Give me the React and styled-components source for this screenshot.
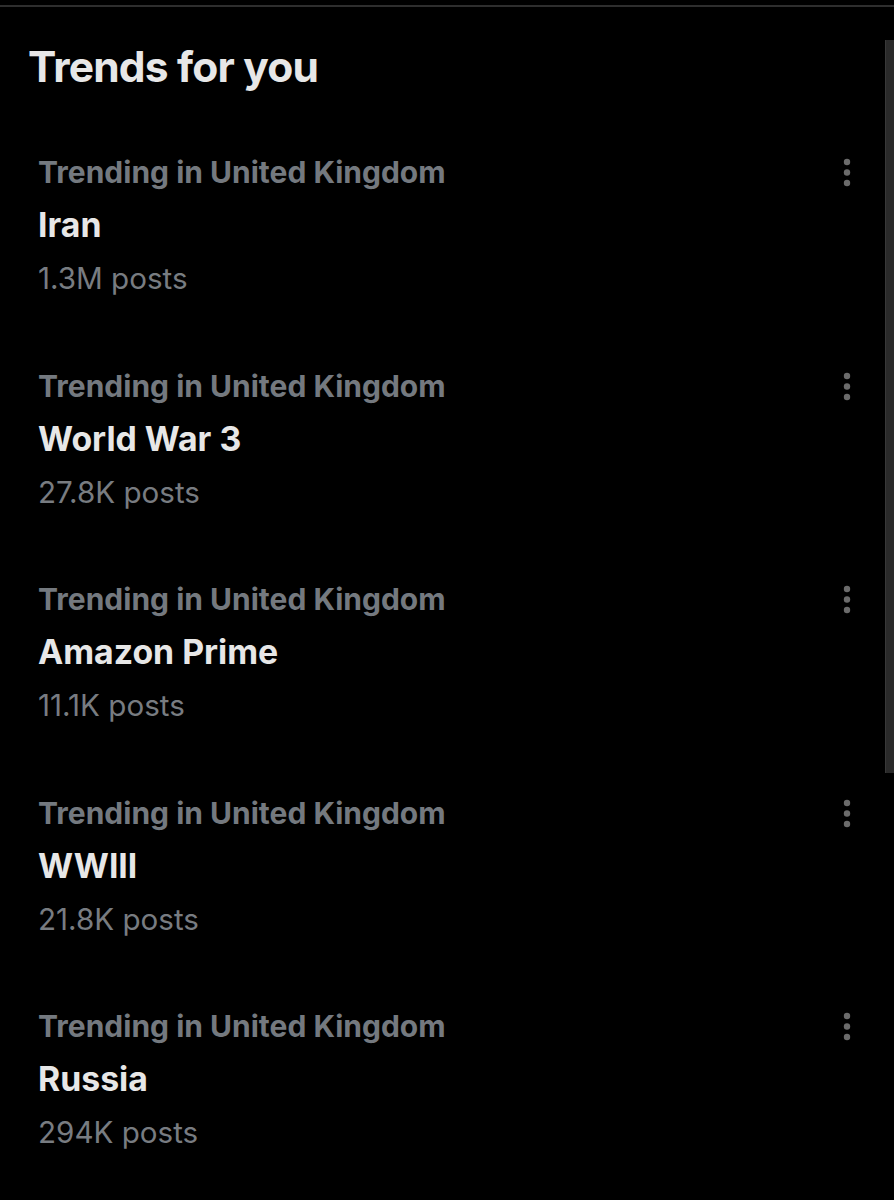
import React from 'react';
import styled, { createGlobalStyle } from 'styled-components';

const GlobalStyle = createGlobalStyle`
  html, body {
    margin: 0;
    padding: 0;
    background: #000;
  }
  body {
    font-family: Inter, "Noto Sans", sans-serif;
    -webkit-font-smoothing: antialiased;
  }
`;

const Page = styled.div`
  position: relative;
  width: 894px;
  min-height: 1200px;
  background: #000;
  padding-top: 5px;
  box-sizing: border-box;
  overflow: hidden;
`;

const TopRule = styled.div`
  height: 2px;
  background: #2e2e2e;
`;

const Header = styled.div`
  padding: 34px 28px 49px;
  h2 {
    margin: 0;
    font-size: 42.5px;
    line-height: 52px;
    font-weight: 700;
    color: #e7e7e7;
    letter-spacing: -0.8px;
  }
`;

const TrendList = styled.div`
  display: flex;
  flex-direction: column;
`;

const TrendRow = styled.div`
  display: flex;
  align-items: flex-start;
  justify-content: space-between;
  padding: 12px 37px 55.5px 38px;
`;

const TrendText = styled.div`
  display: flex;
  flex-direction: column;
`;

const Context = styled.span`
  font-size: 30px;
  line-height: 36px;
  font-weight: 700;
  color: #74797f;
`;

const Name = styled.span`
  margin-top: 10px;
  font-size: 33.8px;
  line-height: 50px;
  font-weight: 700;
  color: #e7e7e7;
`;

const Count = styled.span`
  margin-top: 6px;
  font-size: 29.6px;
  line-height: 44px;
  font-weight: 400;
  color: #787c81;
`;

const MoreButton = styled.div`
  width: 20px;
  height: 36px;
  margin-top: 1px;
  display: flex;
  align-items: center;
  justify-content: center;
  svg {
    display: block;
  }
`;

const ScrollThumb = styled.div`
  position: absolute;
  top: 40px;
  right: 0;
  width: 8px;
  height: 733px;
  background: #2a2a2a;
  border-left: 1px solid #383838;
`;

const trends = [
  { name: 'Iran', posts: '1.3M posts' },
  { name: 'World War 3', posts: '27.8K posts' },
  { name: 'Amazon Prime', posts: '11.1K posts' },
  { name: 'WWIII', posts: '21.8K posts' },
  { name: 'Russia', posts: '294K posts' },
];

function Dots() {
  return (
    <svg width="8" height="30" viewBox="0 0 8 30">
      <circle cx="4" cy="4" r="3.2" fill="#6b6b6b" />
      <circle cx="4" cy="14.5" r="3.2" fill="#6b6b6b" />
      <circle cx="4" cy="25" r="3.2" fill="#6b6b6b" />
    </svg>
  );
}

export default function App() {
  return (
    <Page>
      <GlobalStyle />
      <TopRule />
      <Header>
        <h2>Trends for you</h2>
      </Header>
      <TrendList>
        {trends.map((t) => (
          <TrendRow key={t.name}>
            <TrendText>
              <Context>Trending in United Kingdom</Context>
              <Name>{t.name}</Name>
              <Count>{t.posts}</Count>
            </TrendText>
            <MoreButton>
              <Dots />
            </MoreButton>
          </TrendRow>
        ))}
      </TrendList>
      <ScrollThumb />
    </Page>
  );
}
